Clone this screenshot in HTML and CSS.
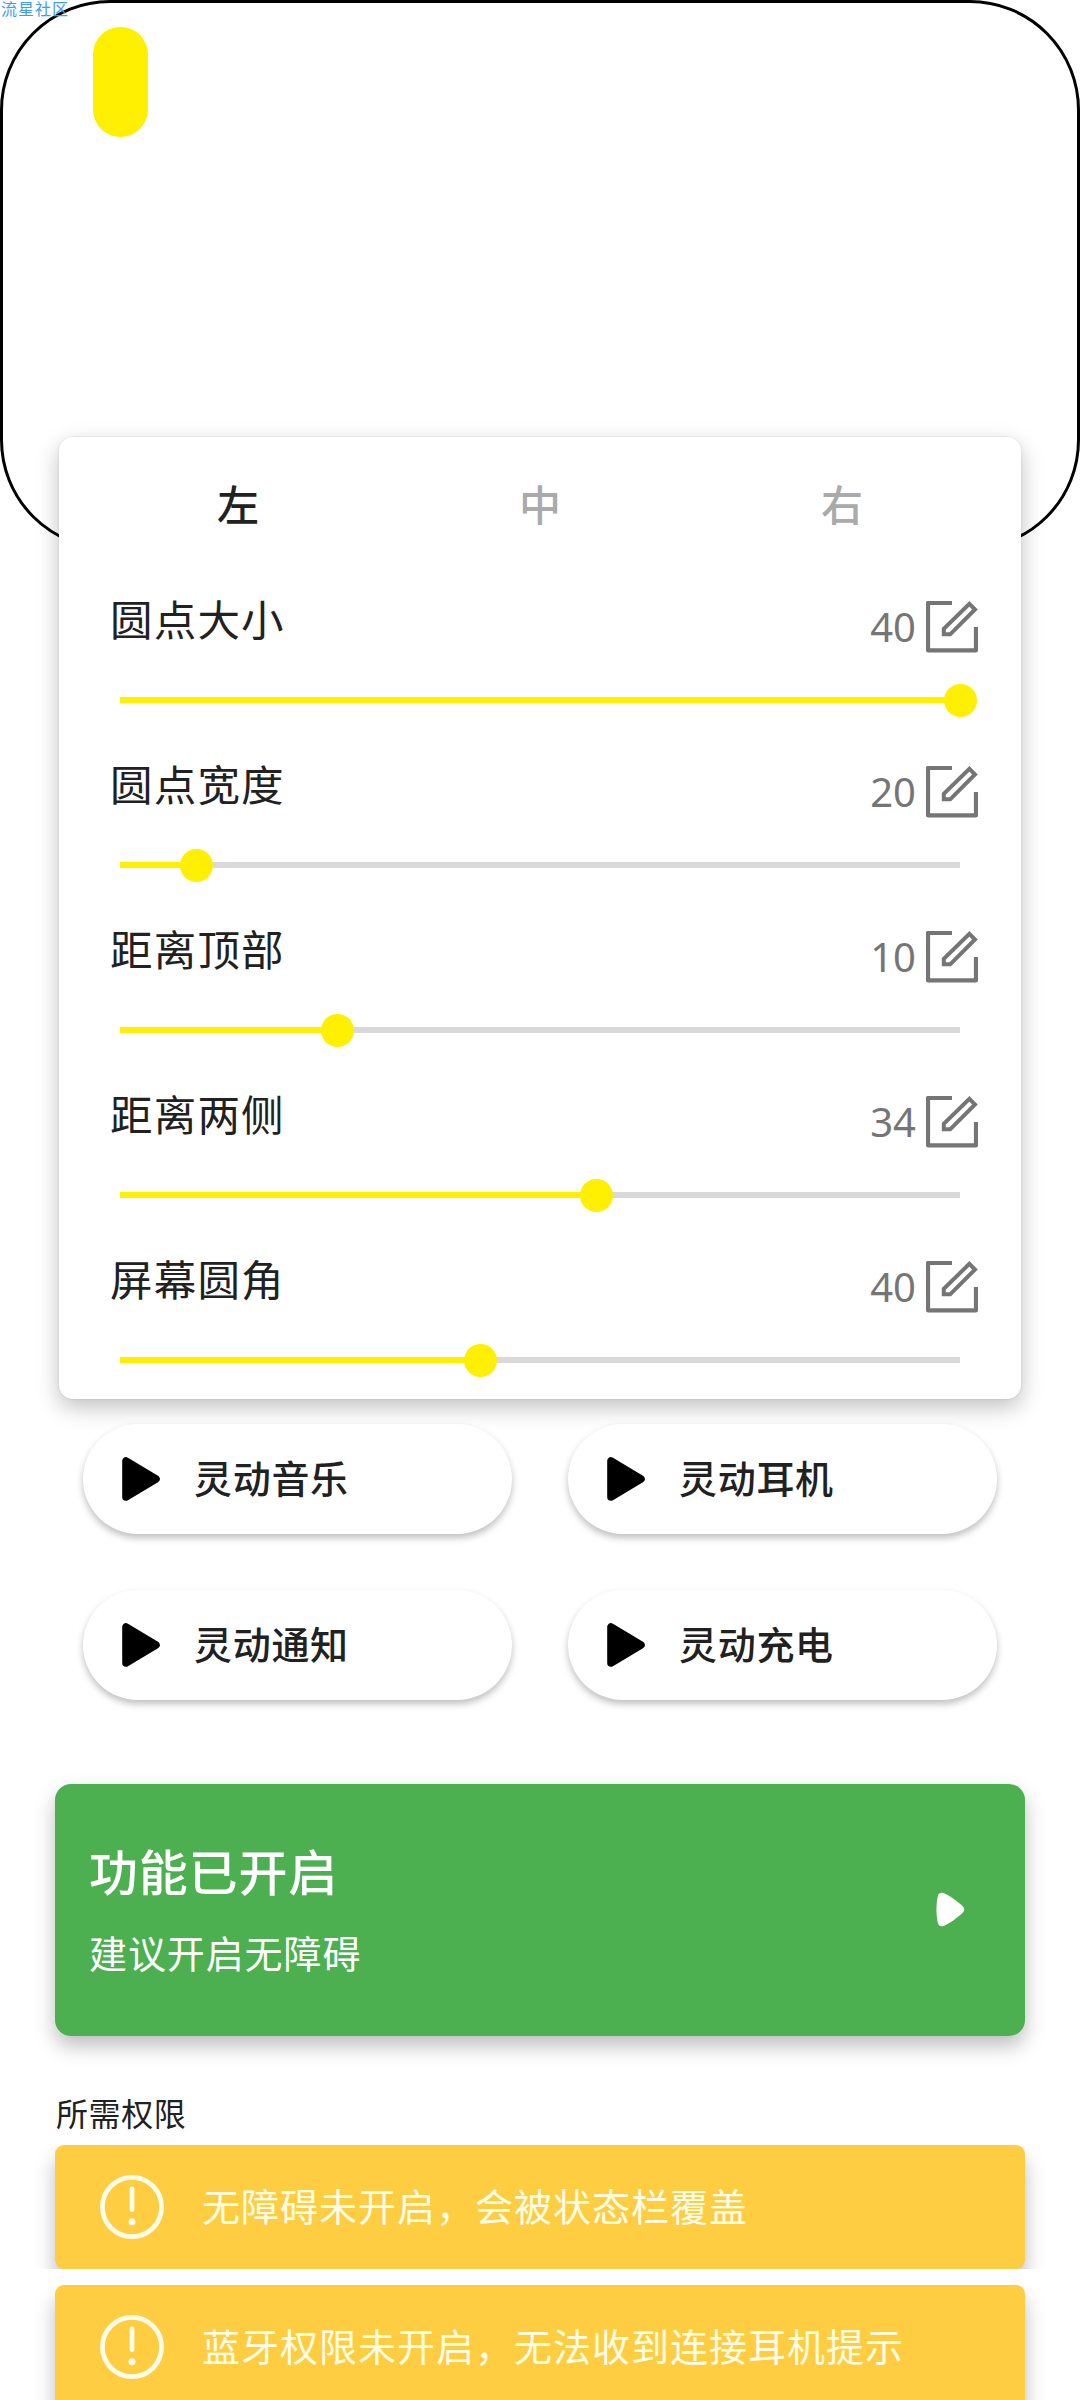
FILE: index.html
```html
<!DOCTYPE html>
<html lang="zh-CN">
<head>
<meta charset="utf-8">
<title>灵动设置</title>
<link rel="stylesheet" href="styles.css">
</head>
<body>
<svg class="defs" aria-hidden="true">
  <symbol id="edit" viewBox="0 0 52 52">
    <path d="M26 2H2V49.3H50V26" fill="none" stroke="currentColor" stroke-width="4.2" stroke-linejoin="round"/>
    <path d="M43.4 2.8L49 8.5L24.2 33.3H17.8V27.8Z" fill="none" stroke="currentColor" stroke-width="4"/>
  </symbol>
  <symbol id="play" viewBox="0 0 38 44">
    <path d="M4 4V40L34 22Z" fill="currentColor" stroke="currentColor" stroke-width="7.6" stroke-linejoin="round"/>
  </symbol>
  <symbol id="alert" viewBox="0 0 64 64">
    <circle cx="32" cy="32" r="29.6" fill="none" stroke="currentColor" stroke-width="4.8"/>
    <path d="M32 14V34.5" stroke="currentColor" stroke-width="4.8" stroke-linecap="round"/>
    <circle cx="32" cy="46.8" r="3.5" fill="currentColor"/>
  </symbol>
</svg>
<main class="page">
  <span class="watermark">流星社区</span>
  <section class="preview"><div class="dot"></div></section>

  <section class="settings">
    <nav class="tabs">
      <span class="tab active">左</span>
      <span class="tab">中</span>
      <span class="tab">右</span>
    </nav>
    <div class="row">
      <div class="head"><span class="label">圆点大小</span><span class="value">40</span><svg class="edit"><use href="#edit"/></svg></div>
      <div class="track"><div class="fill" style="width:100%"></div></div>
    </div>
    <div class="row">
      <div class="head"><span class="label">圆点宽度</span><span class="value">20</span><svg class="edit"><use href="#edit"/></svg></div>
      <div class="track"><div class="fill" style="width:9.05%"></div></div>
    </div>
    <div class="row">
      <div class="head"><span class="label">距离顶部</span><span class="value">10</span><svg class="edit"><use href="#edit"/></svg></div>
      <div class="track"><div class="fill" style="width:25.95%"></div></div>
    </div>
    <div class="row">
      <div class="head"><span class="label">距离两侧</span><span class="value">34</span><svg class="edit"><use href="#edit"/></svg></div>
      <div class="track"><div class="fill" style="width:56.7%"></div></div>
    </div>
    <div class="row">
      <div class="head"><span class="label">屏幕圆角</span><span class="value">40</span><svg class="edit"><use href="#edit"/></svg></div>
      <div class="track"><div class="fill" style="width:42.86%"></div></div>
    </div>
  </section>

  <section class="actions">
    <div class="action"><svg class="play"><use href="#play"/></svg><span>灵动音乐</span></div>
    <div class="action"><svg class="play"><use href="#play"/></svg><span>灵动耳机</span></div>
    <div class="action"><svg class="play"><use href="#play"/></svg><span>灵动通知</span></div>
    <div class="action"><svg class="play"><use href="#play"/></svg><span>灵动充电</span></div>
  </section>

  <section class="status">
    <div class="status-body">
      <h1 class="status-title">功能已开启</h1>
      <p class="status-text">建议开启无障碍</p>
    </div>
    <svg class="status-arrow" viewBox="0 0 29 35"><path d="M1.8 4Q3.2 0 7.6 1C13 3 21 9 26.5 14Q30 17.5 26.5 21C21 26 13 32 7.6 34Q3.2 35 1.8 31C0 23 0 12 1.8 4Z" fill="currentColor"/></svg>
  </section>

  <h2 class="heading">所需权限</h2>
  <div class="slot"><div class="warning"><svg class="alert"><use href="#alert"/></svg><span>无障碍未开启，会被状态栏覆盖</span></div></div>
  <div class="slot"><div class="warning"><svg class="alert"><use href="#alert"/></svg><span>蓝牙权限未开启，无法收到连接耳机提示</span></div></div>
</main>
</body>
</html>
```
FILE: styles.css
```css
* { box-sizing: border-box; }
body {
  margin: 0;
  background: #fff;
  color: #212121;
  font-family: "Noto Sans CJK SC", sans-serif;
}
h1, h2, p { margin: 0; font-weight: 400; }
.defs { display: none; }
svg { flex: none; display: block; }
span { white-space: nowrap; }
.page {
  position: relative;
  width: 1080px;
  height: 2400px;
  overflow: hidden;
}
.watermark {
  position: absolute;
  left: 1px;
  top: 0;
  font-size: 16px;
  line-height: 16px;
  letter-spacing: 1px;
  color: #3d9bf5;
}
.preview {
  height: 550px;
  padding: 24px 0 0 90px;
  border: 3px solid #000;
  border-radius: 110px;
}
.dot {
  width: 55px;
  height: 110px;
  border-radius: 28px;
  background: #ffef00;
}
.settings {
  width: 962px;
  height: 962px;
  margin: -113px auto 0 59px;
  padding: 0 28px;
  border-radius: 14px;
  background: #fff;
  box-shadow: 0 0 2px rgba(0, 0, 0, .12), 0 8px 22px rgba(0, 0, 0, .25);
}
.tabs {
  display: grid;
  grid-template-columns: repeat(3, 302px);
  height: 136px;
  line-height: 131px;
  text-align: center;
}
.tab { font-size: 42px; font-weight: 500; color: #aaa; }
.tab.active { color: #212121; }
.row { height: 165px; padding: 14px 15px 0 23px; }
.head { display: flex; align-items: center; height: 80px; }
.label {
  flex: 1;
  font-size: 42.5px;
  line-height: 66px;
  letter-spacing: 1.2px;
  margin-top: -19px;
}
.value {
  font-family: "Noto Sans", sans-serif;
  font-size: 40px;
  line-height: 60px;
  color: #757575;
  margin-right: 10px;
}
.edit { width: 52px; height: 52px; color: #757575; }
.track {
  width: 840px;
  height: 6px;
  margin: 30px 0 0 10px;
  background: #d9d9d9;
}
.fill { position: relative; height: 6px; background: #ffef00; }
.fill::after {
  content: "";
  position: absolute;
  right: -16.5px;
  top: -13.5px;
  width: 33px;
  height: 33px;
  border-radius: 50%;
  background: #ffef00;
}
.actions {
  display: grid;
  grid-template-columns: 429px 429px;
  gap: 56px;
  padding: 25px 0 0 83px;
}
.action {
  display: flex;
  align-items: center;
  gap: 34px;
  height: 110px;
  padding-left: 39px;
  border-radius: 55px;
  background: #fff;
  box-shadow: 0 4px 7px rgba(0, 0, 0, .25);
  font-size: 38px;
  font-weight: 500;
  letter-spacing: .7px;
}
.action span { padding-bottom: 5px; }
.play { width: 38px; height: 44px; color: #000; }
.status {
  display: flex;
  align-items: center;
  justify-content: space-between;
  width: 970px;
  height: 252px;
  margin: 84px 0 0 55px;
  padding: 0 60px 0 34px;
  border-radius: 16px;
  background: #4caf50;
  color: #fff;
  box-shadow: 0 10px 20px rgba(0, 0, 0, .26);
}
.status-body { padding-bottom: 6px; }
.status-title { font-size: 49px; line-height: 80px; font-weight: 500; letter-spacing: .8px; }
.status-text { font-size: 38px; line-height: 64px; letter-spacing: .9px; margin-top: 10px; }
.status-arrow { width: 29px; height: 35px; margin-top: -1px; }
.heading {
  margin: 52px 0 0 56px;
  height: 57px;
  font-size: 32px;
  line-height: 48px;
  letter-spacing: .6px;
}
.slot { padding: 0 55px; margin-bottom: 16px; overflow: hidden; }
.warning {
  display: flex;
  align-items: center;
  gap: 38px;
  height: 124px;
  padding-left: 45px;
  border-radius: 9px;
  background: #ffcd42;
  color: #fffde7;
  font-size: 38px;
  letter-spacing: 1px;
  box-shadow: 0 14px 20px rgba(0, 0, 0, .26);
}
.warning span { padding-bottom: 5px; }
.alert { width: 64px; height: 64px; }
```
